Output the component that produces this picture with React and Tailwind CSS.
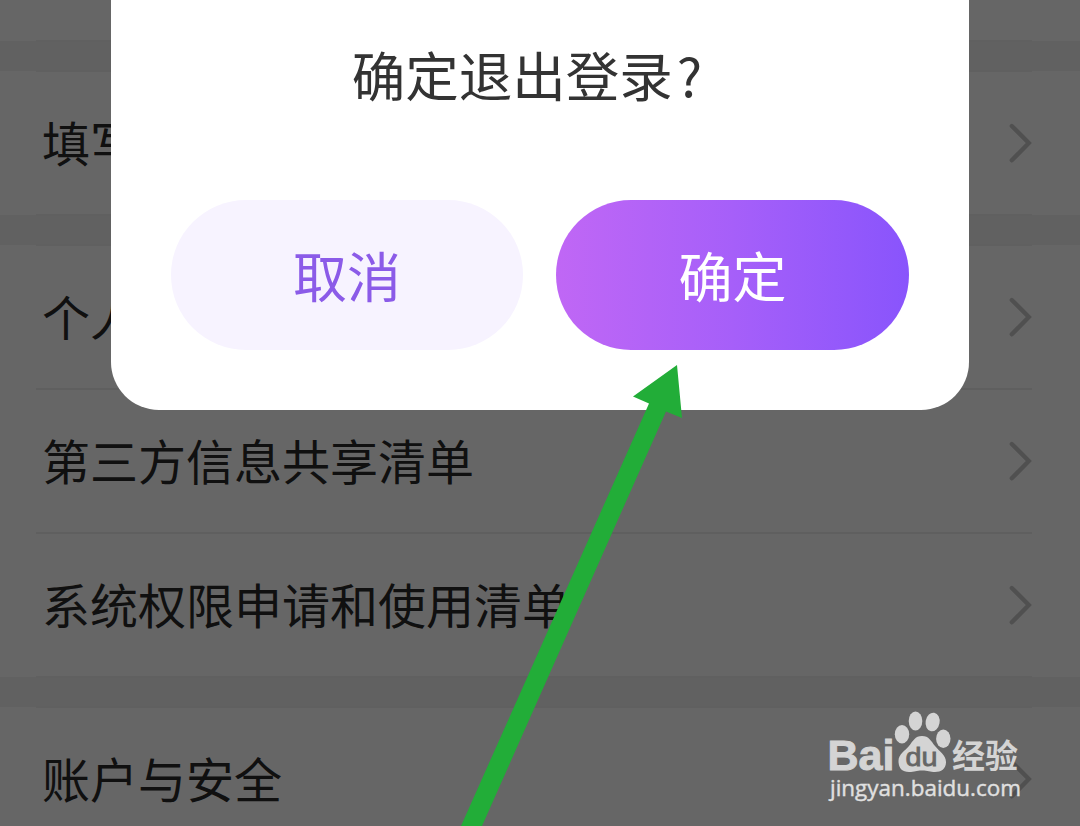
const sections = [
    ["填写"],
    ["个人", "第三方信息共享清单", "系统权限申请和使用清单"],
    ["账户与安全"],
];

function Chevron() {
    return (
        <svg
            width="24"
            height="42"
            viewBox="0 0 24 42"
            fill="none"
            stroke="#c9c9c9"
            strokeWidth="4.4"
            strokeLinecap="round"
        >
            <path d="M3.8 4 L20.8 21 L3.8 38.3" />
        </svg>
    );
}

function Divider({ edge }) {
    return (
        <div
            className={`relative -my-px ml-9 mr-12 h-0.5 ${
                edge ? "bg-[#f1f1f1]" : "bg-[#eeeeee]"
            }`}
        />
    );
}

function Row({ label }) {
    return (
        <div className="flex h-36 items-center justify-between pl-[42px] pr-12 text-[48px] leading-none text-[#282828]">
            <span className="pb-1">{label}</span>
            <Chevron />
        </div>
    );
}

function Section({ rows }) {
    return (
        <>
            <div className="h-[30px] bg-[#f3f3f3]" />
            <Divider edge />
            {rows.map((label, i) => (
                <div key={label}>
                    <Row label={label} />
                    <Divider edge={i === rows.length - 1} />
                </div>
            ))}
        </>
    );
}

function LogoutDialog() {
    return (
        <div className="absolute left-[111px] top-0 h-[410px] w-[858px] rounded-b-[48px] bg-white px-[60px]">
            <h1 className="flex h-[200px] justify-center pr-[26px] pt-[47px] text-[53.5px] leading-none text-[#333]">
                确定退出登录<span className="pl-1">?</span>
            </h1>
            <div className="flex gap-[33px] text-[54px] leading-none">
                <button className="h-[150px] w-[352px] rounded-full bg-[#f7f3ff] text-[#8b5be8]">
                    取消
                </button>
                <button className="h-[150px] flex-1 rounded-full bg-linear-to-r from-[#c067f5] via-[#a65ff9] to-[#8954fc] text-white">
                    确定
                </button>
            </div>
        </div>
    );
}

function Arrow() {
    return (
        <svg
            className="absolute left-[460px] top-[364px]"
            width="224"
            height="462"
            viewBox="460 364 224 462"
            fill="#22ad38"
        >
            <path d="M677 365 L633 396.5 L649 403.5 L461 826 H482 L666 411.5 L682 418 Z" />
        </svg>
    );
}

function Watermark() {
    return (
        <svg
            className="absolute left-[820px] top-[700px]"
            width="210"
            height="110"
            viewBox="820 700 210 110"
            fill="#d4d4d4"
        >
            <text
                x="827.5"
                y="770"
                fontSize="43"
                fontWeight="700"
                textLength="67"
                lengthAdjust="spacingAndGlyphs"
                stroke="#d4d4d4"
                strokeWidth="1"
                className="font-['Liberation_Sans',sans-serif]"
            >
                Bai
            </text>
            <ellipse cx="902" cy="734.3" rx="7.2" ry="9.2" />
            <ellipse cx="915.5" cy="721" rx="6.8" ry="9.4" />
            <ellipse cx="932.6" cy="722" rx="7" ry="9.4" transform="rotate(10 932.6 722)" />
            <ellipse cx="943.3" cy="738.7" rx="7.2" ry="9.2" />
            <path d="M922 736 C929 736 931 741 935 746 C939 751 946 755 946 762 C946 769 941 772 935 772 C930 772 928 770.5 922 770.5 C916 770.5 915 772 909 772 C902 772 898.5 768 898.5 761 C898.5 754 905 751 909 746 C913 741 915 736 922 736 Z" />
            <text
                x="905.5"
                y="765.5"
                fontSize="26"
                fill="#666"
                stroke="#666"
                strokeWidth="0.8"
                textLength="32"
                lengthAdjust="spacingAndGlyphs"
                className="font-['Liberation_Sans',sans-serif]"
            >
                du
            </text>
            <text
                x="952"
                y="768"
                fontSize="33"
                fontWeight="700"
                textLength="66"
                className="font-['Noto_Sans_CJK_SC',sans-serif]"
            >
                经验
            </text>
            <text
                x="830"
                y="796"
                fontSize="22.5"
                fill="#e0e0e0"
                stroke="#e0e0e0"
                strokeWidth="0.4"
                textLength="191"
                lengthAdjust="spacingAndGlyphs"
                className="font-['Open_Sans',sans-serif]"
            >
                jingyan.baidu.com
            </text>
        </svg>
    );
}

export default function App() {
    return (
        <div className="relative h-[826px] w-[1080px] overflow-hidden bg-white font-['Noto_Sans_CJK_SC',sans-serif]">
            <div className="h-[41px]" />
            <Divider edge />
            {sections.map((rows) => (
                <Section key={rows[0]} rows={rows} />
            ))}
            <div className="absolute inset-0 bg-black/60" />
            <LogoutDialog />
            <Arrow />
            <Watermark />
        </div>
    );
}
